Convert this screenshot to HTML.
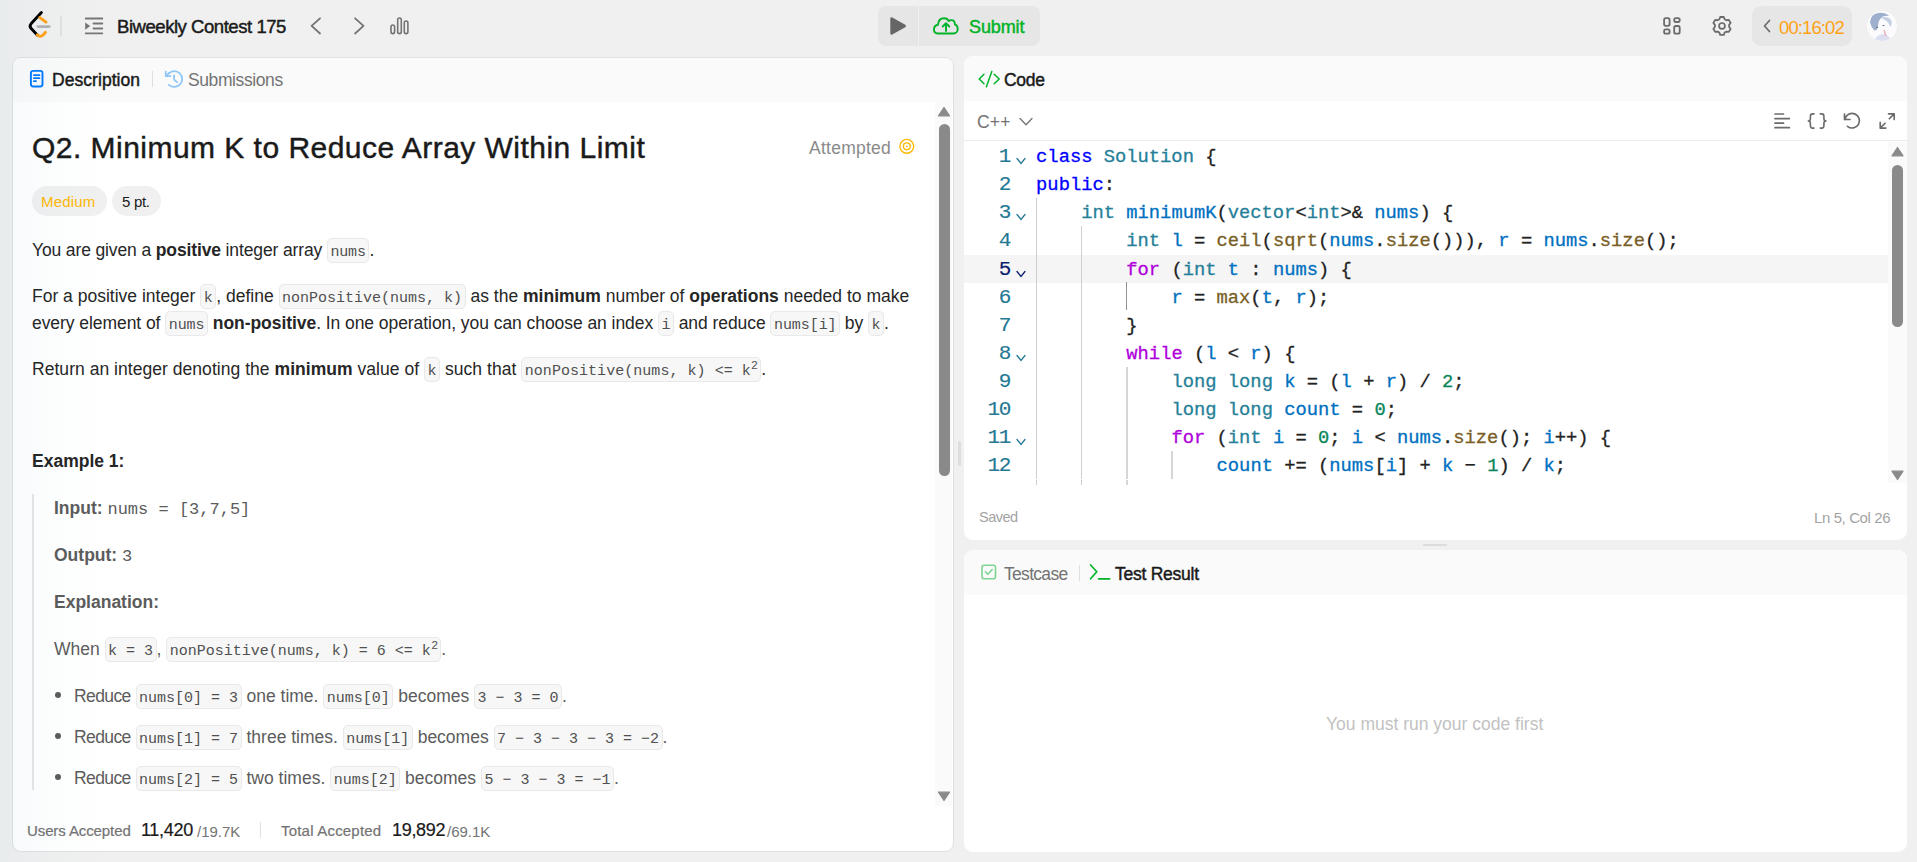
<!DOCTYPE html>
<html><head><meta charset="utf-8">
<style>
*{margin:0;padding:0;box-sizing:border-box}
html,body{width:1917px;height:862px;overflow:hidden;background:#f0f0f0;font-family:"Liberation Sans",sans-serif;color:#1a1a1a}
.a{position:absolute;white-space:nowrap}
.panel{position:absolute;background:#fff;border-radius:9px;overflow:hidden}
.hdr{position:absolute;left:0;right:0;top:0;height:44px;background:#fafafa}
.mono{font-family:"Liberation Mono",monospace}
code,.code{font-family:"Liberation Mono",monospace;font-size:15px;background:#f7f7f7;border:1px solid #e9e9e9;border-radius:5px;padding:1px 3px;color:#262626}
b{font-weight:700}
.tx{font-size:17.5px}
.tx code{font-size:15px;padding:4.8px 2.5px 1px;position:relative;top:0;color:#505050}
.pre{font-family:"Liberation Mono",monospace;font-size:17px;color:#5c5c5c}
.cd{font-family:"Liberation Mono",monospace;font-size:18.8px;line-height:28.125px;color:#222;-webkit-text-stroke:0.3px currentColor}
.ln{font-size:21px;letter-spacing:-1.35px;-webkit-text-stroke:0.15px currentColor}
.k{color:#0000ff}.ty{color:#267f99}.v{color:#0070c1}.f{color:#795e26}.c{color:#af00db}.n{color:#098658}
sup{font-family:"Liberation Sans",sans-serif;font-size:11.5px;vertical-align:baseline;position:relative;top:-6.5px;line-height:0;margin-left:0.5px}
</style></head>
<body>
<!-- TOP NAV -->
<div id="nav">
  <svg class="a" style="left:25px;top:8px" width="30" height="32" viewBox="25 8 30 32">
    <path d="M41.4 12.6 L31.2 23.6 Q29 26.1 31.2 28.6 L37.2 34.9" stroke="#000" stroke-width="2.9" fill="none" stroke-linecap="round" stroke-linejoin="round"/>
    <path d="M39.8 17.6 L46 22.2" stroke="#ffa116" stroke-width="2.9" fill="none" stroke-linecap="round"/>
    <path d="M37.2 34.9 Q40.2 37.6 43.2 35 L45.5 32.3" stroke="#ffa116" stroke-width="2.9" fill="none" stroke-linecap="round"/>
    <path d="M37.9 26.6 L49.3 26.6" stroke="#b3b3b3" stroke-width="2.6" fill="none" stroke-linecap="round"/>
  </svg>
  <div class="a" style="left:60px;top:16px;width:2px;height:20px;background:#e0e0e0"></div>
  <svg class="a" style="left:84px;top:16px" width="20" height="20" viewBox="84 16 20 20">
    <path d="M85.7 18.5H102.3M93.5 23.5H102.3M93.5 28.5H102.3M85.7 33.4H102.3" stroke="#767676" stroke-width="1.8" stroke-linecap="round"/>
    <path d="M85.2 22.5L90.2 26.1L85.2 29.7Z" fill="#767676"/>
  </svg>
  <div class="a" style="left:117px;top:16px;font-size:18.5px;color:#1a1a1a;letter-spacing:-0.45px;-webkit-text-stroke:0.45px currentColor;">Biweekly Contest 175</div>
  <svg class="a" style="left:305px;top:14px" width="80" height="24" viewBox="305 14 80 24">
    <path d="M320 18.3L311.6 25.9L320 33.5" stroke="#737373" stroke-width="1.8" fill="none" stroke-linecap="round" stroke-linejoin="round"/>
    <path d="M355.1 18.3L363.5 25.9L355.1 33.5" stroke="#737373" stroke-width="1.8" fill="none" stroke-linecap="round" stroke-linejoin="round"/>
  </svg>
  <svg class="a" style="left:388px;top:15px" width="24" height="22" viewBox="388 15 24 22">
    <rect x="391" y="25" width="3.6" height="8.6" rx="1.8" stroke="#737373" stroke-width="1.6" fill="none"/>
    <rect x="397.7" y="18" width="3.6" height="15.6" rx="1.8" stroke="#737373" stroke-width="1.6" fill="none"/>
    <rect x="404.3" y="21" width="3.6" height="12.6" rx="1.8" stroke="#737373" stroke-width="1.6" fill="none"/>
  </svg>

  <!-- run / submit -->
  <div class="a" style="left:878px;top:6px;width:162px;height:40px;background:#e6e6e6;border-radius:8px"></div>
  <div class="a" style="left:918px;top:6px;width:1px;height:40px;background:#f0f0f0"></div>
  <svg class="a" style="left:886px;top:14px" width="24" height="24" viewBox="886 14 24 24">
    <path d="M891.6 18.6 L904.6 26 L891.6 33.4Z" fill="#666" stroke="#666" stroke-width="2.6" stroke-linejoin="round"/>
  </svg>
  <svg class="a" style="left:928px;top:10px" width="36" height="32" viewBox="928 10 36 32">
    <path d="M937.6 33.5C935.3 33.5 934 31.5 934 29.3C934 27.1 935.5 25.3 937.9 24.8C938.3 20.7 940.8 18.2 944 18.2C946.5 18.2 948.1 19.5 948.8 21.1C949.5 20.4 950.4 20.1 951.3 20.1C953.5 20.1 954.9 21.9 954.9 24.4C956.7 25.1 957.7 26.9 957.7 29C957.7 31.5 956 33.5 953.6 33.5Z" stroke="#01b328" stroke-width="1.9" fill="none" stroke-linejoin="round"/>
    <path d="M946 31V23.4M942.7 26.5L946 23.2L949.3 26.5" stroke="#01b328" stroke-width="1.9" fill="none" stroke-linecap="round" stroke-linejoin="round"/>
  </svg>
  <div class="a" style="left:969px;top:17px;font-size:18px;color:#01b328;letter-spacing:-0.1px;-webkit-text-stroke:0.45px currentColor;">Submit</div>

  <!-- right icons -->
  <svg class="a" style="left:1660px;top:15px" width="24" height="22" viewBox="1660 15 24 22">
    <rect x="1664.1" y="18.1" width="5.5" height="7.7" rx="1.7" stroke="#6b6b6b" stroke-width="1.8" fill="none"/>
    <rect x="1664.1" y="29.3" width="5.5" height="4.3" rx="1.7" stroke="#6b6b6b" stroke-width="1.8" fill="none"/>
    <rect x="1674.2" y="18.1" width="5.5" height="3.9" rx="1.7" stroke="#6b6b6b" stroke-width="1.8" fill="none"/>
    <rect x="1674.2" y="26" width="5.5" height="7.6" rx="1.7" stroke="#6b6b6b" stroke-width="1.8" fill="none"/>
  </svg>
  <svg class="a" style="left:1710px;top:14px" width="24" height="24" viewBox="1710 14 24 24">
    <path d="M1719.35 19.21 L1720.20 16.98 L1723.80 16.98 L1724.65 19.21 L1726.47 20.26 L1728.83 19.88 L1730.62 23.00 L1729.12 24.85 L1729.12 26.95 L1730.62 28.80 L1728.83 31.92 L1726.47 31.54 L1724.65 32.59 L1723.80 34.82 L1720.20 34.82 L1719.35 32.59 L1717.53 31.54 L1715.17 31.92 L1713.38 28.80 L1714.88 26.95 L1714.88 24.85 L1713.38 23.00 L1715.17 19.88 L1717.53 20.26Z" stroke="#6b6b6b" stroke-width="1.8" fill="none" stroke-linejoin="round"/>
    <circle cx="1722" cy="25.9" r="2.9" stroke="#6b6b6b" stroke-width="1.7" fill="none"/>
  </svg>
  <div class="a" style="left:1752px;top:6px;width:100px;height:40px;background:#e6e6e6;border-radius:9px"></div>
  <svg class="a" style="left:1760px;top:18px" width="14" height="16" viewBox="0 0 14 16">
    <path d="M9.5 2.5L4.5 8L9.5 13.5" stroke="#6b6b6b" stroke-width="1.7" fill="none" stroke-linecap="round" stroke-linejoin="round"/>
  </svg>
  <div class="a" style="left:1779px;top:17px;font-size:18.5px;color:#ffa116;letter-spacing:-0.9px">00:16:02</div>
  <svg class="a" style="left:1866px;top:10px" width="32" height="32" viewBox="1866 10 32 32">
    <defs><clipPath id="av"><circle cx="1882" cy="26" r="14.9"/></clipPath></defs>
    <g clip-path="url(#av)">
      <rect x="1866" y="10" width="32" height="32" fill="#fbfbfd"/>
      <path d="M1870 22 Q1871 14 1878 13 Q1885 12 1889 16 Q1884 15 1881 18 Q1878 21 1878 27 Q1876 32 1874 30 Q1871 27 1870 22Z" fill="#9fb0cf"/>
      <path d="M1881 18 Q1887 15 1891 20 Q1893 24 1890 27 Q1889 22 1885 20Z" fill="#c5cfe3"/>
      <path d="M1876 27.5 h2 M1882.5 25.5 h2" stroke="#6d7488" stroke-width="1.2"/>
      <path d="M1875 39 Q1878 34 1884 34 Q1889 35 1891 41 L1875 42Z" fill="#dcdff0"/>
      <path d="M1884 30 L1886 36" stroke="#eab3b8" stroke-width="1.4"/>
    </g>
  </svg>
</div>

<!-- LEFT PANEL -->
<div class="panel" id="left" style="left:12px;top:57px;width:942px;height:795px;border:1px solid #e0e0e0">
  <div class="hdr"></div>
</div>
<div id="lc">
  <svg class="a" style="left:29px;top:69px" width="16" height="20" viewBox="0 0 16 20">
    <rect x="1.9" y="1.9" width="11.6" height="15.6" rx="2.2" stroke="#007aff" stroke-width="1.9" fill="none"/>
    <path d="M4.9 6.2H10.5M4.9 9.2H10.5M4.9 12.2H7" stroke="#007aff" stroke-width="1.7" stroke-linecap="round"/>
  </svg>
  <div class="a" style="left:52px;top:70px;font-size:17.5px;letter-spacing:0.05px;color:#1a1a1a;-webkit-text-stroke:0.45px currentColor;">Description</div>
  <div class="a" style="left:152px;top:71px;width:1px;height:16px;background:#dedede"></div>
  <svg class="a" style="left:160px;top:66px" width="28" height="26" viewBox="160 66 28 26">
    <path d="M168.7 73.4 A7.9 7.9 0 1 1 168.9 84.8" stroke="#8fc6f7" stroke-width="1.8" fill="none" stroke-linecap="round"/>
    <path d="M165.8 71.6V76.2H170.4" stroke="#8fc6f7" stroke-width="1.8" fill="none" stroke-linecap="round" stroke-linejoin="round"/>
    <path d="M166.2 75.8L169.2 72.9" stroke="#8fc6f7" stroke-width="1.8" fill="none" stroke-linecap="round"/>
    <path d="M174.1 75.3V79.6L177 82.2" stroke="#8fc6f7" stroke-width="1.8" fill="none" stroke-linecap="round" stroke-linejoin="round"/>
  </svg>
  <div class="a" style="left:188px;top:70px;font-size:17.5px;letter-spacing:-0.4px;color:#737373">Submissions</div>

  <!-- scrollbar -->
  <div class="a" style="left:935px;top:101px;width:17px;height:705px;background:#fafafa"></div>
  <svg class="a" style="left:937px;top:106px" width="14" height="12" viewBox="0 0 14 12"><path d="M7 1.5L12.5 9.8H1.5Z" fill="#8a8a8a" stroke="#8a8a8a" stroke-width="1.2" stroke-linejoin="round"/></svg>
  <div class="a" style="left:939px;top:124px;width:11px;height:352px;background:#8a8a8a;border-radius:6px"></div>
  <svg class="a" style="left:937px;top:790px" width="14" height="12" viewBox="0 0 14 12"><path d="M7 10.5L12.5 2.2H1.5Z" fill="#8a8a8a" stroke="#8a8a8a" stroke-width="1.2" stroke-linejoin="round"/></svg>

  <div class="a sb" style="left:32px;top:131px;font-size:30px;letter-spacing:0.47px;color:#1a1a1a;-webkit-text-stroke:0.45px #1a1a1a">Q2. Minimum K to Reduce Array Within Limit</div>
  <div class="a" style="left:809px;top:138px;font-size:17.5px;color:#8a8a8a;letter-spacing:0.25px">Attempted</div>
  <svg class="a" style="left:897px;top:137px" width="20" height="20" viewBox="0 0 20 20">
    <circle cx="9.8" cy="9.3" r="6.9" stroke="#ffb800" stroke-width="1.4" fill="none"/>
    <circle cx="9.8" cy="9.3" r="3.4" stroke="#ffb800" stroke-width="1.4" fill="none"/>
    <circle cx="9.8" cy="9.3" r="0.9" fill="#ffb800"/>
  </svg>

  <div class="a pill" style="left:32px;top:186px;width:75px;height:30px;border-radius:15px;background:#f0f0f0"></div>
  <div class="a" style="left:41px;top:193px;font-size:15px;color:#ffb700;letter-spacing:0.2px">Medium</div>
  <div class="a pill" style="left:112px;top:186px;width:49px;height:30px;border-radius:15px;background:#f0f0f0"></div>
  <div class="a" style="left:122px;top:193px;font-size:15px;color:#1a1a1a;letter-spacing:-0.3px">5 pt.</div>

<div id="desc" style="color:#262626">
  <div class="a tx" style="left:32px;top:240px;letter-spacing:-0.13px">You are given a <b>positive</b> integer array <code>nums</code>.</div>
  <div class="a tx" style="left:32px;top:286px">For a positive integer <code>k</code>, define <code>nonPositive(nums, k)</code> as the <b>minimum</b> number of <b>operations</b> needed to make</div>
  <div class="a tx" style="left:32px;top:313px;letter-spacing:-0.06px">every element of <code>nums</code> <b>non-positive</b>. In one operation, you can choose an index <code>i</code> and reduce <code>nums[i]</code> by <code>k</code>.</div>
  <div class="a tx" style="left:32px;top:359px;letter-spacing:0.04px">Return an integer denoting the <b>minimum</b> value of <code>k</code> such that <code>nonPositive(nums, k) &lt;= k<sup>2</sup></code>.</div>
  <div class="a tx" style="left:32px;top:451px"><b>Example 1:</b></div>
  <div class="a" style="left:32px;top:494px;width:2px;height:296px;background:#e6e6e6"></div>
  <div class="a tx" style="left:54px;top:498px;color:#5c5c5c"><b>Input:</b> <span class="pre">nums = [3,7,5]</span></div>
  <div class="a tx" style="left:54px;top:545px;color:#5c5c5c"><b>Output:</b> <span class="pre">3</span></div>
  <div class="a tx" style="left:54px;top:592px;color:#5c5c5c"><b>Explanation:</b></div>
  <div class="a tx" style="left:54px;top:639px;color:#5c5c5c">When <code>k = 3</code>, <code>nonPositive(nums, k) = 6 &lt;= k<sup>2</sup></code>.</div>
  <div class="a" style="left:55px;top:692px;width:6px;height:6px;border-radius:3px;background:#5c5c5c"></div>
  <div class="a tx" style="left:74px;top:686px;color:#5c5c5c"><span style="letter-spacing:-0.6px">Reduce</span> <code>nums[0] = 3</code> one time. <code>nums[0]</code> becomes <code>3 &#8722; 3 = 0</code>.</div>
  <div class="a" style="left:55px;top:733px;width:6px;height:6px;border-radius:3px;background:#5c5c5c"></div>
  <div class="a tx" style="left:74px;top:727px;color:#5c5c5c"><span style="letter-spacing:-0.6px">Reduce</span> <code>nums[1] = 7</code> three times. <code>nums[1]</code> becomes <code>7 &#8722; 3 &#8722; 3 &#8722; 3 = &#8722;2</code>.</div>
  <div class="a" style="left:55px;top:774px;width:6px;height:6px;border-radius:3px;background:#5c5c5c"></div>
  <div class="a tx" style="left:74px;top:768px;color:#5c5c5c"><span style="letter-spacing:-0.6px">Reduce</span> <code>nums[2] = 5</code> two times. <code>nums[2]</code> becomes <code>5 &#8722; 3 &#8722; 3 = &#8722;1</code>.</div>

  <div class="a" style="left:27px;top:822px;font-size:15px;color:#737373;letter-spacing:-0.1px;-webkit-text-stroke:0.2px currentColor">Users Accepted</div>
  <div class="a" style="left:141px;top:820px;font-size:18px;color:#1a1a1a;letter-spacing:-0.3px;-webkit-text-stroke:0.2px currentColor">11,420</div>
  <div class="a" style="left:197px;top:823px;font-size:15px;color:#737373">/19.7K</div>
  <div class="a" style="left:260px;top:822px;width:1px;height:16px;background:#e0e0e0"></div>
  <div class="a" style="left:281px;top:822px;font-size:15px;color:#737373;letter-spacing:0.2px;-webkit-text-stroke:0.2px currentColor">Total Accepted</div>
  <div class="a" style="left:392px;top:820px;font-size:18px;color:#1a1a1a;letter-spacing:-0.3px;-webkit-text-stroke:0.2px currentColor">19,892</div>
  <div class="a" style="left:447px;top:823px;font-size:15px;color:#737373">/69.1K</div>
</div>
</div>



<!-- CODE PANEL -->
<div class="panel" id="code" style="left:964px;top:56px;width:943px;height:484px">
  <div class="hdr" style="height:45px"></div>
</div>

<!-- TEST PANEL -->
<div class="panel" id="test" style="left:964px;top:550px;width:943px;height:302px">
  <div class="hdr" style="height:45px"></div>
</div>
<div id="codec">
  <svg class="a" style="left:976px;top:69px" width="26" height="22" viewBox="976 69 26 22">
    <path d="M984 74.2L979.2 79L984 83.8M994.2 74.2L999.2 79L994.2 83.8M991.8 71.4L986.4 86.7" stroke="#01b328" stroke-width="1.5" fill="none" stroke-linecap="round" stroke-linejoin="round"/>
  </svg>
  <div class="a" style="left:1004px;top:70px;font-size:17.5px;letter-spacing:-0.3px;color:#1a1a1a;-webkit-text-stroke:0.45px currentColor;">Code</div>
  <div class="a" style="left:977px;top:112px;font-size:17.5px;color:#737373;letter-spacing:0.2px">C++</div>
  <svg class="a" style="left:1017px;top:114px" width="18" height="14" viewBox="1017 114 18 14"><path d="M1020 118.5L1026 124.7L1032 118.5" stroke="#737373" stroke-width="1.3" fill="none" stroke-linecap="round" stroke-linejoin="round"/></svg>
  <svg class="a" style="left:1770px;top:108px" width="130" height="26" viewBox="1770 108 130 26">
    <path d="M1775 114H1783.5M1775 118.6H1789.4M1775 123.2H1783.5M1775 127.7H1789.4" stroke="#6b6b6b" stroke-width="1.7" stroke-linecap="round"/>
    <path d="M1814 113.9H1812.6Q1810.4 113.9 1810.4 116.2V118.6Q1810.4 121 1808.3 121Q1810.4 121 1810.4 123.4V125.8Q1810.4 128.1 1812.6 128.1H1814M1820.3 113.9H1821.7Q1823.9 113.9 1823.9 116.2V118.6Q1823.9 121 1826 121Q1823.9 121 1823.9 123.4V125.8Q1823.9 128.1 1821.7 128.1H1820.3" stroke="#6b6b6b" stroke-width="1.6" fill="none" stroke-linecap="round" stroke-linejoin="round"/>
    <path d="M1845 119.3A7.3 7.3 0 1 1 1847.5 126.3" stroke="#6b6b6b" stroke-width="1.7" fill="none" stroke-linecap="round"/>
    <path d="M1844.5 114V119.5H1850" stroke="#6b6b6b" stroke-width="1.7" fill="none" stroke-linecap="round" stroke-linejoin="round"/>
    <path d="M1888.5 113.9H1894.2V119.6M1894.2 113.9L1889.3 118.8M1880.2 122.4V128.1H1885.9M1880.2 128.1L1885.1 123.2" stroke="#6b6b6b" stroke-width="1.6" fill="none" stroke-linecap="round" stroke-linejoin="round"/>
  </svg>
  <div class="a" style="left:964px;top:140px;width:943px;height:1px;background:#ebebeb"></div>
  <div class="a" style="left:964px;top:255px;width:924px;height:28px;background:#f5f5f5"></div>
  <div class="a" style="left:1036px;top:197.75px;width:1px;height:28.2px;background:#cfcfcf"></div>
  <div class="a" style="left:1036px;top:225.88px;width:1px;height:28.2px;background:#cfcfcf"></div>
  <div class="a" style="left:1081px;top:225.88px;width:1px;height:28.2px;background:#cfcfcf"></div>
  <div class="a" style="left:1036px;top:254.00px;width:1px;height:28.2px;background:#cfcfcf"></div>
  <div class="a" style="left:1081px;top:254.00px;width:1px;height:28.2px;background:#cfcfcf"></div>
  <div class="a" style="left:1036px;top:282.12px;width:1px;height:28.2px;background:#cfcfcf"></div>
  <div class="a" style="left:1081px;top:282.12px;width:1px;height:28.2px;background:#cfcfcf"></div>
  <div class="a" style="left:1126px;top:282.12px;width:1px;height:28.2px;background:#939393"></div>
  <div class="a" style="left:1036px;top:310.25px;width:1px;height:28.2px;background:#cfcfcf"></div>
  <div class="a" style="left:1081px;top:310.25px;width:1px;height:28.2px;background:#cfcfcf"></div>
  <div class="a" style="left:1036px;top:338.38px;width:1px;height:28.2px;background:#cfcfcf"></div>
  <div class="a" style="left:1081px;top:338.38px;width:1px;height:28.2px;background:#cfcfcf"></div>
  <div class="a" style="left:1036px;top:366.50px;width:1px;height:28.2px;background:#cfcfcf"></div>
  <div class="a" style="left:1081px;top:366.50px;width:1px;height:28.2px;background:#cfcfcf"></div>
  <div class="a" style="left:1126px;top:366.50px;width:2px;height:28.2px;background:#d6d6d6"></div>
  <div class="a" style="left:1036px;top:394.62px;width:1px;height:28.2px;background:#cfcfcf"></div>
  <div class="a" style="left:1081px;top:394.62px;width:1px;height:28.2px;background:#cfcfcf"></div>
  <div class="a" style="left:1126px;top:394.62px;width:2px;height:28.2px;background:#d6d6d6"></div>
  <div class="a" style="left:1036px;top:422.75px;width:1px;height:28.2px;background:#cfcfcf"></div>
  <div class="a" style="left:1081px;top:422.75px;width:1px;height:28.2px;background:#cfcfcf"></div>
  <div class="a" style="left:1126px;top:422.75px;width:2px;height:28.2px;background:#d6d6d6"></div>
  <div class="a" style="left:1036px;top:450.88px;width:1px;height:28.2px;background:#cfcfcf"></div>
  <div class="a" style="left:1081px;top:450.88px;width:1px;height:28.2px;background:#cfcfcf"></div>
  <div class="a" style="left:1126px;top:450.88px;width:2px;height:28.2px;background:#d6d6d6"></div>
  <div class="a" style="left:1171px;top:450.88px;width:2px;height:28.2px;background:#d6d6d6"></div>
  <div class="a cd ln" style="left:960px;width:50px;text-align:right;top:143.00px;color:#237893">1</div>
  <svg class="a" style="left:1015px;top:157.00px" width="12" height="9" viewBox="0 0 12 9"><path d="M2 1.5L6 6.5L10 1.5" stroke="#237893" stroke-width="1.3" fill="none" stroke-linecap="round"/></svg>
  <div class="a cd" style="left:1036.10px;top:143.00px"><span class="k">class</span> <span class="ty">Solution</span> {</div>
  <div class="a cd ln" style="left:960px;width:50px;text-align:right;top:171.12px;color:#237893">2</div>
  <div class="a cd" style="left:1036.10px;top:171.12px"><span class="k">public</span>:</div>
  <div class="a cd ln" style="left:960px;width:50px;text-align:right;top:199.25px;color:#237893">3</div>
  <svg class="a" style="left:1015px;top:213.25px" width="12" height="9" viewBox="0 0 12 9"><path d="M2 1.5L6 6.5L10 1.5" stroke="#237893" stroke-width="1.3" fill="none" stroke-linecap="round"/></svg>
  <div class="a cd" style="left:1081.22px;top:199.25px"><span class="ty">int</span> <span class="v">minimumK</span>(<span class="ty">vector</span>&lt;<span class="ty">int</span>&gt;&amp; <span class="v">nums</span>) {</div>
  <div class="a cd ln" style="left:960px;width:50px;text-align:right;top:227.38px;color:#237893">4</div>
  <div class="a cd" style="left:1126.34px;top:227.38px"><span class="ty">int</span> <span class="v">l</span> = <span class="f">ceil</span>(<span class="f">sqrt</span>(<span class="v">nums</span>.<span class="f">size</span>())), <span class="v">r</span> = <span class="v">nums</span>.<span class="f">size</span>();</div>
  <div class="a cd ln" style="left:960px;width:50px;text-align:right;top:255.50px;color:#0b216f">5</div>
  <svg class="a" style="left:1015px;top:269.50px" width="12" height="9" viewBox="0 0 12 9"><path d="M2 1.5L6 6.5L10 1.5" stroke="#0b216f" stroke-width="1.3" fill="none" stroke-linecap="round"/></svg>
  <div class="a cd" style="left:1126.34px;top:255.50px"><span class="c">for</span> (<span class="ty">int</span> <span class="v">t</span> : <span class="v">nums</span>) {</div>
  <div class="a cd ln" style="left:960px;width:50px;text-align:right;top:283.62px;color:#237893">6</div>
  <div class="a cd" style="left:1171.46px;top:283.62px"><span class="v">r</span> = <span class="f">max</span>(<span class="v">t</span>, <span class="v">r</span>);</div>
  <div class="a cd ln" style="left:960px;width:50px;text-align:right;top:311.75px;color:#237893">7</div>
  <div class="a cd" style="left:1126.34px;top:311.75px">}</div>
  <div class="a cd ln" style="left:960px;width:50px;text-align:right;top:339.88px;color:#237893">8</div>
  <svg class="a" style="left:1015px;top:353.88px" width="12" height="9" viewBox="0 0 12 9"><path d="M2 1.5L6 6.5L10 1.5" stroke="#237893" stroke-width="1.3" fill="none" stroke-linecap="round"/></svg>
  <div class="a cd" style="left:1126.34px;top:339.88px"><span class="c">while</span> (<span class="v">l</span> &lt; <span class="v">r</span>) {</div>
  <div class="a cd ln" style="left:960px;width:50px;text-align:right;top:368.00px;color:#237893">9</div>
  <div class="a cd" style="left:1171.46px;top:368.00px"><span class="ty">long</span> <span class="ty">long</span> <span class="v">k</span> = (<span class="v">l</span> + <span class="v">r</span>) / <span class="n">2</span>;</div>
  <div class="a cd ln" style="left:960px;width:50px;text-align:right;top:396.12px;color:#237893">10</div>
  <div class="a cd" style="left:1171.46px;top:396.12px"><span class="ty">long</span> <span class="ty">long</span> <span class="v">count</span> = <span class="n">0</span>;</div>
  <div class="a cd ln" style="left:960px;width:50px;text-align:right;top:424.25px;color:#237893">11</div>
  <svg class="a" style="left:1015px;top:438.25px" width="12" height="9" viewBox="0 0 12 9"><path d="M2 1.5L6 6.5L10 1.5" stroke="#237893" stroke-width="1.3" fill="none" stroke-linecap="round"/></svg>
  <div class="a cd" style="left:1171.46px;top:424.25px"><span class="c">for</span> (<span class="ty">int</span> <span class="v">i</span> = <span class="n">0</span>; <span class="v">i</span> &lt; <span class="v">nums</span>.<span class="f">size</span>(); <span class="v">i</span>++) {</div>
  <div class="a cd ln" style="left:960px;width:50px;text-align:right;top:452.38px;color:#237893">12</div>
  <div class="a cd" style="left:1216.58px;top:452.38px"><span class="v">count</span> += (<span class="v">nums</span>[<span class="v">i</span>] + <span class="v">k</span> &#8722; <span class="n">1</span>) / <span class="v">k</span>;</div>
  <div class="a" style="left:1036px;top:480px;width:1px;height:5px;background:#cfcfcf"></div>
  <div class="a" style="left:1081px;top:480px;width:1px;height:5px;background:#cfcfcf"></div>
  <div class="a" style="left:1126px;top:480px;width:2px;height:5px;background:#d6d6d6"></div>
  <div class="a" style="left:1888px;top:142px;width:19px;height:341px;background:#fafafa"></div>
  <svg class="a" style="left:1890px;top:145px" width="15" height="14" viewBox="0 0 15 14"><path d="M7.5 2.5L13 10.8H2Z" fill="#8a8a8a" stroke="#8a8a8a" stroke-width="1.2" stroke-linejoin="round"/></svg>
  <div class="a" style="left:1892px;top:165px;width:11px;height:162px;background:#8a8a8a;border-radius:6px"></div>
  <svg class="a" style="left:1890px;top:468px" width="15" height="14" viewBox="0 0 15 14"><path d="M7.5 11.5L13 3.2H2Z" fill="#8a8a8a" stroke="#8a8a8a" stroke-width="1.2" stroke-linejoin="round"/></svg>
  <div class="a" style="left:979px;top:509px;font-size:14.5px;color:#a3a3a3;letter-spacing:-0.5px">Saved</div>
  <div class="a" style="left:1814px;top:509px;font-size:15px;color:#a3a3a3;letter-spacing:-0.4px">Ln 5, Col 26</div>
  <div class="a" style="left:1423px;top:544px;width:24px;height:2px;border-radius:1px;background:#dcdcdc"></div>
  <div class="a" style="left:958px;top:441px;width:3px;height:25px;border-radius:1.5px;background:#dedede"></div>
</div>
<div id="testc">
  <svg class="a" style="left:980px;top:563px" width="18" height="18" viewBox="0 0 18 18">
    <rect x="2" y="2.2" width="13.5" height="13.5" rx="2" stroke="#7fd492" stroke-width="1.6" fill="none"/>
    <path d="M5.3 8.8L7.8 11.3L12.2 6.5" stroke="#7fd492" stroke-width="1.6" fill="none" stroke-linecap="round" stroke-linejoin="round"/>
  </svg>
  <div class="a" style="left:1004px;top:564px;font-size:17.5px;color:#737373;letter-spacing:-0.7px">Testcase</div>
  <div class="a" style="left:1079px;top:565px;width:1px;height:16px;background:#dedede"></div>
  <svg class="a" style="left:1088px;top:563px" width="24" height="20" viewBox="0 0 24 20">
    <path d="M2.6 2L8.8 8.8L2.6 15.8M10.6 15.8H21.6" stroke="#01b328" stroke-width="1.7" fill="none" stroke-linecap="round" stroke-linejoin="round"/>
  </svg>
  <div class="a" style="left:1115px;top:564px;font-size:17.5px;color:#1a1a1a;letter-spacing:-0.25px;-webkit-text-stroke:0.45px currentColor;">Test Result</div>
  <div class="a" style="left:1326px;top:714px;font-size:17.5px;color:#c2c2c2">You must run your code first</div>
</div>
<div class="a" style="left:0;top:0;width:110px;height:862px;background:linear-gradient(90deg,rgba(0,102,137,0.03),rgba(0,102,137,0.012) 50%,rgba(0,102,137,0))"></div>
</body></html>
